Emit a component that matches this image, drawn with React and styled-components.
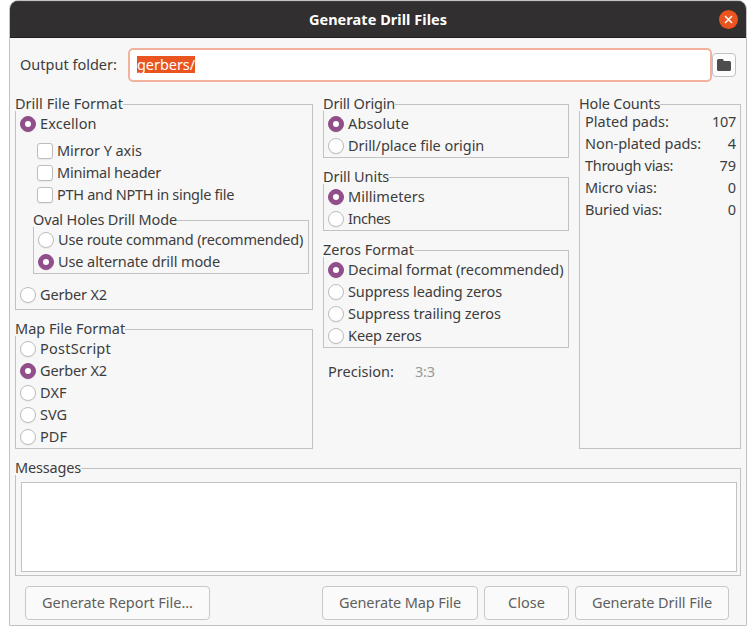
import React from 'react';
import styled, { createGlobalStyle } from 'styled-components';

const BG = '#f7f7f7';
const LINE = '#c2c2c2';

const GlobalStyle = createGlobalStyle`
  *, *::before, *::after { box-sizing: border-box; }
  body {
    margin: 0;
    background: #fff;
    color: #3d3d3d;
    font: 14.5px/22px "Noto Sans", sans-serif;
    overflow: hidden;
  }
`;

const Window = styled.main`
  width: 738px;
  height: 626px;
  margin-left: 9px;
  border: 1px solid ${LINE};
  border-radius: 9px 9px 0 0;
  background: ${BG};
  overflow: hidden;
`;

const TitleBar = styled.header`
  display: grid;
  grid-template-columns: 36px 1fr 36px;
  align-items: center;
  height: 37px;
  background: #322f30;
  border-top: 1px solid #403d3d;
  border-bottom: 1px solid #1f1d1d;
  color: #fff;
`;

const Title = styled.h1`
  grid-column: 2;
  margin: 0;
  padding-bottom: 2px;
  font-size: 14.5px;
  line-height: 22px;
  font-weight: 700;
  text-align: center;
`;

const CloseIcon = styled.button`
  width: 19px;
  height: 19px;
  margin: 0 0 1px 8.5px;
  padding: 0;
  border: 0;
  border-radius: 50%;
  background: #e95420;
  svg { display: block; }
`;

const Label = styled.span`
  letter-spacing: ${(p) => p.$track}px;
  white-space: pre;
`;

const Body = styled.div`
  padding: 10px 5px 0;
`;

const FolderRow = styled.div`
  display: flex;
  align-items: center;
  height: 34px;
  padding-left: 5px;
`;

const FolderLabel = styled.label`
  width: 108px;
  padding-bottom: 2px;
`;

const FolderInput = styled.div`
  display: flex;
  align-items: center;
  width: 584px;
  height: 34px;
  padding: 0 0 1px 7px;
  border: 2px solid #f2b29d;
  border-radius: 5px;
  background: #fff;
`;

const Selection = styled.span`
  height: 17px;
  line-height: 17px;
  background: #e95420;
  color: #fff;
`;

const BrowseButton = styled.button`
  display: flex;
  align-items: center;
  justify-content: center;
  width: 24px;
  height: 24px;
  padding: 0;
  border: 1px solid ${LINE};
  border-radius: 4px;
  background: #fcfcfc;
`;

const Columns = styled.div`
  display: grid;
  grid-template-columns: 298px 246px 162px;
  gap: 10px;
  height: 345px;
  margin-top: 22px;
`;

const Column = styled.div`
  display: flex;
  flex-direction: column;
  gap: 19px;
`;

const GroupBox = styled.section`
  height: ${(p) => p.$h}px;
  border: 1px solid ${LINE};
`;

const Legend = styled.div`
  width: fit-content;
  height: 16px;
  margin: -10px 0 2px -1px;
  line-height: 16px;
  background: ${BG};
`;

const OptionRow = styled.label`
  display: flex;
  align-items: center;
  gap: 4px;
  height: 22px;
  padding-left: 4px;
  ${Label} { padding-bottom: 2px; }
`;

const RadioMark = styled.span`
  display: flex;
  align-items: center;
  justify-content: center;
  width: 16px;
  height: 16px;
  border-radius: 50%;
  border: 1px solid ${(p) => (p.$on ? '#924d8b' : '#bdbdbd')};
  background: ${(p) => (p.$on ? '#924d8b' : '#fff')};
  box-shadow: 0 1px 1px rgba(0, 0, 0, 0.05);
  &::after {
    content: '';
    width: 6px;
    height: 6px;
    border-radius: 50%;
    background: #fff;
  }
`;

const CheckMark = styled.span`
  width: 16px;
  height: 16px;
  border: 1px solid #bdbdbd;
  border-radius: 3px;
  background: #fff;
  box-shadow: 0 1px 1px rgba(0, 0, 0, 0.05);
`;

const CheckList = styled.div`
  margin: 5px 0 14px 17px;
`;

const NestedGroup = styled.div`
  width: 276px;
  margin: 0 0 10px 17px;
`;

const Precision = styled.div`
  display: flex;
  margin-top: -7px;
  padding-left: 5px;
`;

const PrecisionName = styled.span`
  width: 87px;
`;

const Muted = styled.span`
  color: #9a9a9a;
`;

const Counts = styled.dl`
  margin: -3px 4px 0 5px;
`;

const CountRow = styled.div`
  display: flex;
  justify-content: space-between;
  height: 22px;
  dd { margin: 0; }
`;

const MessagesArea = styled.div`
  margin-top: 19px;
`;

const MessageLog = styled.div`
  height: 90px;
  margin: 7px 3px 0 5px;
  border: 1px solid ${LINE};
  background: #fff;
`;

const Actions = styled.footer`
  display: flex;
  gap: 6px;
  margin: 10px 12px 0 10px;
`;

const ActionButton = styled.button`
  width: ${(p) => p.$w}px;
  height: 34px;
  padding: 0 0 2px;
  border: 1px solid #c8c8c8;
  border-radius: 4px;
  background: #fafafa;
  color: #5f5f5f;
  font: inherit;
  white-space: nowrap;
  margin-right: ${(p) => p.$after || 0}px;
`;

/* Letter spacing per label, in px */
const TRACK = {
  'Output folder:': 0, 'gerbers/': -0.06, 'Drill File Format': 0.01, Excellon: 0.1,
  'Mirror Y axis': -0.06, 'Minimal header': -0.22, 'PTH and NPTH in single file': -0.29,
  'Oval Holes Drill Mode': -0.15, 'Use route command (recommended)': -0.2,
  'Use alternate drill mode': -0.1, 'Gerber X2': -0.15, 'Map File Format': 0,
  PostScript: 0.25, DXF: 0.15, SVG: 0.05, PDF: 0.1, 'Drill Origin': -0.18, Absolute: 0.12,
  'Drill/place file origin': -0.05, 'Drill Units': -0.08, Millimeters: 0.05, Inches: -0.45,
  'Zeros Format': 0.01, 'Decimal format (recommended)': -0.08,
  'Suppress leading zeros': -0.14, 'Suppress trailing zeros': -0.08, 'Keep zeros': -0.07,
  'Precision:': 0.02, '3:3': -0.2, 'Hole Counts': -0.19, 'Plated pads:': 0.02,
  'Non-plated pads:': -0.07, 'Through vias:': -0.31, 'Micro vias:': -0.04,
  'Buried vias:': -0.17, 107: -0.29, Messages: -0.17, 'Generate Report File...': -0.03,
  'Generate Map File': -0.12, Close: 0.05, 'Generate Drill File': -0.08,
  'Generate Drill Files': 0.05,
};

const Text = ({ children }) => <Label $track={TRACK[children] || 0}>{children}</Label>;

const Group = ({ title, h, children }) => (
  <GroupBox $h={h}>
    <Legend><Text>{title}</Text></Legend>
    {children}
  </GroupBox>
);

const Radio = ({ on, children }) => (
  <OptionRow><RadioMark $on={on} /><Text>{children}</Text></OptionRow>
);

const Check = ({ children }) => (
  <OptionRow><CheckMark /><Text>{children}</Text></OptionRow>
);

const COUNTS = [
  ['Plated pads:', '107'],
  ['Non-plated pads:', '4'],
  ['Through vias:', '79'],
  ['Micro vias:', '0'],
  ['Buried vias:', '0'],
];

export default function App() {
  return (
    <>
      <GlobalStyle />
      <Window>
        <TitleBar>
          <Title><Text>Generate Drill Files</Text></Title>
          <CloseIcon aria-label="Close window">
            <svg width="19" height="19" viewBox="0 0 19 19">
              <path d="M6 6L13 13M13 6L6 13" stroke="#fff" strokeWidth="1.5" />
            </svg>
          </CloseIcon>
        </TitleBar>
        <Body>
          <FolderRow>
            <FolderLabel><Text>Output folder:</Text></FolderLabel>
            <FolderInput><Selection><Text>gerbers/</Text></Selection></FolderInput>
            <BrowseButton aria-label="Browse">
              <svg width="16" height="16" viewBox="0 0 16 16">
                <path d="M1 3.6Q1 2 2.6 2H6.4Q7.2 2 7.5 3L7.8 4H13.4Q15 4 15 5.6V12.4Q15 14 13.4 14H2.6Q1 14 1 12.4Z" fill="#4d4d4d" />
              </svg>
            </BrowseButton>
          </FolderRow>
          <Columns>
            <Column>
              <Group title="Drill File Format" h={206}>
                <Radio on>Excellon</Radio>
                <CheckList>
                  <Check>Mirror Y axis</Check>
                  <Check>Minimal header</Check>
                  <Check>PTH and NPTH in single file</Check>
                </CheckList>
                <NestedGroup>
                  <Group title="Oval Holes Drill Mode" h={54}>
                    <Radio>Use route command (recommended)</Radio>
                    <Radio on>Use alternate drill mode</Radio>
                  </Group>
                </NestedGroup>
                <Radio>Gerber X2</Radio>
              </Group>
              <Group title="Map File Format" h={120}>
                <Radio>PostScript</Radio>
                <Radio on>Gerber X2</Radio>
                <Radio>DXF</Radio>
                <Radio>SVG</Radio>
                <Radio>PDF</Radio>
              </Group>
            </Column>
            <Column>
              <Group title="Drill Origin" h={54}>
                <Radio on>Absolute</Radio>
                <Radio>Drill/place file origin</Radio>
              </Group>
              <Group title="Drill Units" h={54}>
                <Radio on>Millimeters</Radio>
                <Radio>Inches</Radio>
              </Group>
              <Group title="Zeros Format" h={98}>
                <Radio on>Decimal format (recommended)</Radio>
                <Radio>Suppress leading zeros</Radio>
                <Radio>Suppress trailing zeros</Radio>
                <Radio>Keep zeros</Radio>
              </Group>
              <Precision>
                <PrecisionName><Text>Precision:</Text></PrecisionName>
                <Muted><Text>3:3</Text></Muted>
              </Precision>
            </Column>
            <Column>
              <Group title="Hole Counts" h={345}>
                <Counts>
                  {COUNTS.map(([name, value]) => (
                    <CountRow key={name}>
                      <dt><Text>{name}</Text></dt>
                      <dd><Text>{value}</Text></dd>
                    </CountRow>
                  ))}
                </Counts>
              </Group>
            </Column>
          </Columns>
          <MessagesArea>
            <Group title="Messages" h={108}>
              <MessageLog />
            </Group>
          </MessagesArea>
          <Actions>
            <ActionButton $w={185} $after={106}><Text>Generate Report File...</Text></ActionButton>
            <ActionButton $w={156}><Text>Generate Map File</Text></ActionButton>
            <ActionButton $w={85}><Text>Close</Text></ActionButton>
            <ActionButton $w={154}><Text>Generate Drill File</Text></ActionButton>
          </Actions>
        </Body>
      </Window>
    </>
  );
}
